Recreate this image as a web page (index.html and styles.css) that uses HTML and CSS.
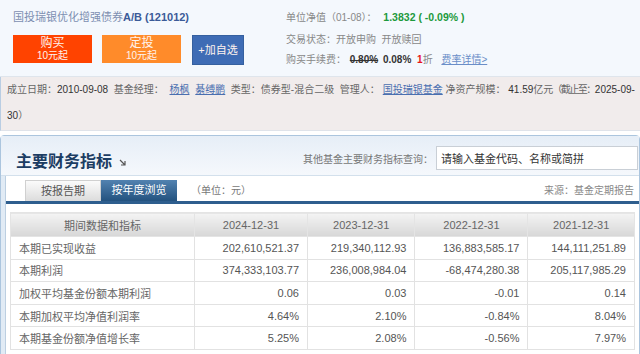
FILE: index.html
```html
<!DOCTYPE html>
<html lang="zh-CN">
<head>
  <meta charset="UTF-8">
  <title>国投瑞银优化增强债券A/B 主要财务指标</title>
  <link rel="stylesheet" href="styles.css">
</head>
<body>
  <div class="top">
    <div class="fund">
      <div class="fund-name">国投瑞银优化增强债券<b>A/B (121012)</b></div>
      <div class="actions">
        <a class="btn buy">购买<small>10元起</small></a>
        <a class="btn plan">定投<small>10元起</small></a>
        <a class="btn fav">+加自选</a>
      </div>
    </div>
    <div class="quote">
      <p class="nav">单位净值（01-08）： <span class="nav-val">1.3832 ( -0.09% )</span></p>
      <p>交易状态：开放申购&nbsp;&nbsp;开放赎回</p>
      <p>购买手续费： <s class="num">0.80%</s> <span class="num">0.08%</span> <span class="red">1</span>折 <a class="fee-link">费率详情&gt;</a></p>
    </div>
  </div>

  <div class="info">
    成立日期：<span class="num">2010-09-08</span>&nbsp; 基金经理： <a>杨枫</a> <a>綦缚鹏</a>&nbsp; 类型：债券型-混合二级&nbsp; 管理人：<a>国投瑞银基金</a> 净资产规模： <span class="num">41.59</span>亿元<span class="tight">（截止至：</span><span class="num">2025-09-</span><br>
    <span class="num">30</span>）
  </div>

  <div class="panel">
    <div class="panel-head">
      <h2>主要财务指标</h2>
      <svg class="corner" width="7" height="7" viewBox="0 0 7 7"><path d="M1 1 L5.5 5.5 M2 6 H6 V2" stroke="#555" stroke-width="1.2" fill="none"/></svg>
      <span class="search-label">其他基金主要财务指标查询：</span>
      <input class="search" type="text" value="请输入基金代码、名称或简拼">
    </div>
    <div class="panel-body">
      <div class="tabs">
        <span class="tab">按报告期</span>
        <span class="tab active">按年度浏览</span>
        <span class="unit">（单位：元）</span>
        <span class="source">来源：基金定期报告</span>
      </div>
      <table class="data">
        <tr>
          <th>期间数据和指标</th>
          <th>2024-12-31</th>
          <th>2023-12-31</th>
          <th>2022-12-31</th>
          <th>2021-12-31</th>
        </tr>
        <tr>
          <td>本期已实现收益</td>
          <td>202,610,521.37</td>
          <td>219,340,112.93</td>
          <td>136,883,585.17</td>
          <td>144,111,251.89</td>
        </tr>
        <tr>
          <td>本期利润</td>
          <td>374,333,103.77</td>
          <td>236,008,984.04</td>
          <td>-68,474,280.38</td>
          <td>205,117,985.29</td>
        </tr>
        <tr>
          <td>加权平均基金份额本期利润</td>
          <td>0.06</td>
          <td>0.03</td>
          <td>-0.01</td>
          <td>0.14</td>
        </tr>
        <tr>
          <td>本期加权平均净值利润率</td>
          <td>4.64%</td>
          <td>2.10%</td>
          <td>-0.84%</td>
          <td>8.04%</td>
        </tr>
        <tr>
          <td>本期基金份额净值增长率</td>
          <td>5.25%</td>
          <td>2.08%</td>
          <td>-0.56%</td>
          <td>7.97%</td>
        </tr>
      </table>
    </div>
  </div>
</body>
</html>
```

FILE: styles.css
```css
body {
  margin: 0;
  width: 640px;
  font-family: "Liberation Sans", "Noto Sans CJK SC", sans-serif;
  color: #555;
  background: #fff;
  overflow: hidden;
}

p {
  margin: 0;
}

a {
  cursor: pointer;
}

.num {
  font-family: "Liberation Sans", sans-serif;
}

/* top block */
.top {
  height: 76px;
  display: flex;
  background: #f4f8fd;
  border-bottom: 1px solid #dfe5ec;
}

.fund {
  padding: 10px 0 0 13px;
  width: 260px;
}

.fund-name {
  font-size: 11px;
  color: #7d8fb1;
  line-height: 14px;
}

.fund-name b {
  color: #3b5b98;
}

.actions {
  display: flex;
  margin-top: 11px;
}

.btn {
  height: 28px;
  display: flex;
  flex-direction: column;
  align-items: center;
  justify-content: center;
  color: #fff3ee;
  font-size: 12px;
  line-height: 13px;
  margin-right: 10px;
}

.btn small {
  font-size: 10px;
  line-height: 12px;
}

.buy {
  width: 79px;
  background: #ff4300;
}

.plan {
  width: 79px;
  margin-right: 11px;
  background: #ff8b2a;
}

.fav {
  width: 50px;
  font-size: 11px;
  background: #3e6cb5;
  border: 1px solid #35609f;
}

.quote {
  padding: 7px 0 0 13px;
  font-size: 10px;
  color: #888;
  line-height: 20px;
}

.quote p {
  height: 20px;
}

.quote .nav {
  height: 23px;
}

.nav-val {
  color: #1d9a3c;
  font-weight: bold;
  font-size: 10.5px;
  margin-left: 4px;
}

.quote .num {
  color: #333;
  font-weight: bold;
  margin: 0 1px;
}

.red {
  color: #e8141a;
  font-weight: bold;
  margin-left: 2px;
}

.fee-link {
  color: #6a8ec8;
  text-decoration: underline;
  margin-left: 6px;
}

/* fund info bar */
.info {
  height: 53px;
  padding: 0 6px;
  font-size: 10px;
  line-height: 26px;
  color: #666;
  background: #f1ecec;
  border-left: 1px solid #b9cde3;
  border-bottom: 1px solid #dfe3ea;
  white-space: nowrap;
  overflow: hidden;
}

.info .num {
  color: #333;
}

.info a {
  color: #4a6fb0;
  text-decoration: underline;
  margin-left: 3px;
}

.info .tight {
  letter-spacing: -1.5px;
  margin-left: -1px;
}

/* financial panel */
.panel {
  margin-top: 4px;
  border: 1px solid #abc5de;
  border-radius: 4px 4px 0 0;
  background: #e1ebf5;
}

.panel-head {
  height: 39px;
  display: flex;
  align-items: center;
  padding-left: 15px;
  background: linear-gradient(#e6eef7, #f5f8fc);
  border-bottom: 1px solid #d3e0ec;
}

.panel-head h2 {
  margin: 8px 0 0;
  font-size: 16px;
  color: #1c3d63;
}

.corner {
  margin: 13px 0 0 7px;
}

.search-label {
  margin: 6px 0 0 auto;
  font-size: 10px;
  color: #777;
}

.search {
  align-self: flex-start;
  width: 196px;
  height: 22px;
  margin: 10px 1px 0 3px;
  padding: 0 0 0 4px;
  border: 1px solid #c9cfd6;
  font-family: "Noto Sans CJK SC", sans-serif;
  font-size: 11px;
  color: #333;
}

.panel-body {
  margin-left: 4px;
  border-left: 1px solid #bccfe1;
  background: #fff;
  height: 180px;
}

.tabs {
  height: 25px;
  display: flex;
  align-items: flex-end;
  padding-left: 19px;
  border-bottom: 3px solid #2e5e8e;
  font-size: 11px;
}

.tab {
  height: 21px;
  line-height: 21px;
  text-align: center;
  box-sizing: border-box;
}

.tab:first-child {
  width: 76px;
  color: #555;
  background: linear-gradient(#fbfbfb, #dcdcdc);
  border: 1px solid #d0d0d0;
  border-bottom: none;
}

.tab.active {
  width: 76px;
  color: #fff;
  background: linear-gradient(#5282b0, #23527f);
}

.unit {
  margin-left: 14px;
  line-height: 21px;
  font-size: 10px;
  color: #777;
}

.source {
  margin-left: auto;
  margin-right: 5px;
  line-height: 21px;
  font-size: 10px;
  color: #888;
}

/* data table */
.data {
  margin: 8px 0 0 4px;
  width: 625px;
  border-collapse: collapse;
  font-size: 11px;
  color: #555;
}

.data th {
  height: 23px;
  padding: 0;
  font-weight: normal;
  color: #666;
  background: linear-gradient(#f4f4f4, #d7d7d7);
  border: 1px solid #e4e4e4;
}

.data th:first-child {
  width: 183px;
}

.data th:nth-child(2),
.data th:nth-child(4) {
  width: 112px;
}

.data td {
  height: 21.6px;
  padding: 0 8px;
  text-align: right;
  border: 1px solid #e2e2e2;
}

.data td:first-child {
  text-align: left;
  font-family: "Noto Sans CJK SC", sans-serif;
  color: #666;
}
```
